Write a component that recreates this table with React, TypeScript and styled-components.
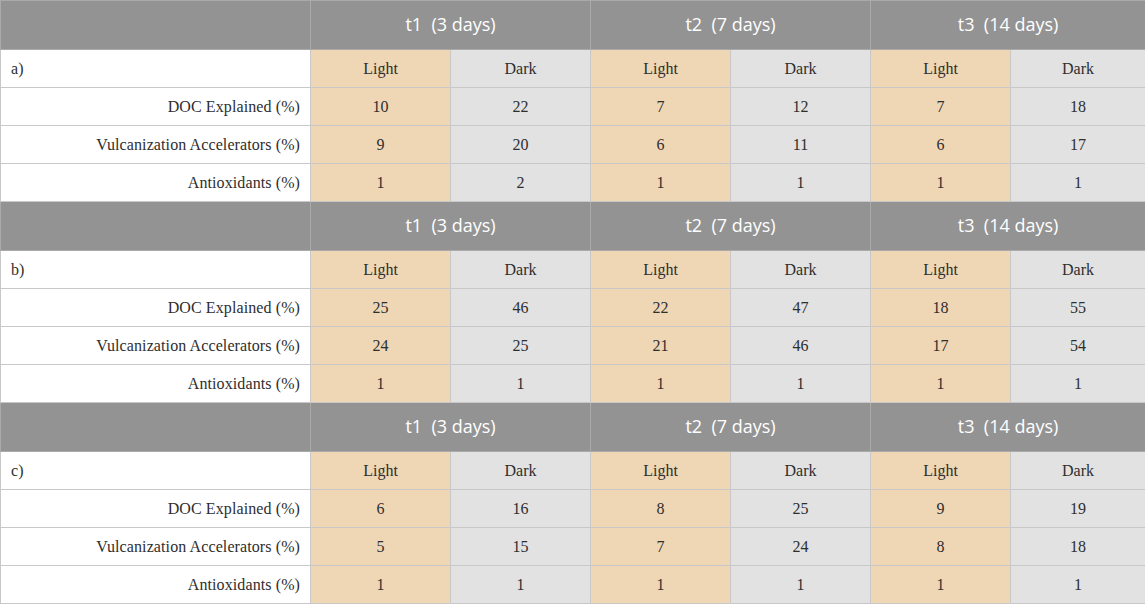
import React from "react";
import styled, { createGlobalStyle } from "styled-components";

const GlobalStyle = createGlobalStyle`
  html, body { margin: 0; padding: 0; background: #ffffff; }
  #root { width: 1145px; }
`;

const Table = styled.table`
  width: 1145px;
  border-collapse: collapse;
  table-layout: fixed;
  font-family: "Liberation Serif", "Times New Roman", serif;
`;

const Col = styled.col<{ $w: number }>`
  width: ${(p) => p.$w}px;
`;

const HeadRow = styled.tr`
  height: 49px;
`;

const HeadCell = styled.th`
  background: #939393;
  color: #ffffff;
  font-family: "Open Sans", "Noto Sans", sans-serif;
  font-weight: 400;
  font-size: 18px;
  text-align: center;
  padding: 0 0 2px 0;
  border: 1px solid #aaaaaa;
  white-space: pre;
`;

const Row = styled.tr`
  height: 38px;
`;

const LabelCell = styled.td<{ $align?: "left" | "right" }>`
  background: #ffffff;
  color: #2e2e2e;
  font-size: 16px;
  letter-spacing: 0.1px;
  text-align: ${(p) => p.$align ?? "right"};
  padding: 0 10px 0 10px;
  border: 1px solid #c8c8c8;
  white-space: nowrap;
`;

const ValueCell = styled.td<{ $tone: "light" | "dark" }>`
  background: ${(p) => (p.$tone === "light" ? "#efd7b6" : "#e2e2e2")};
  color: #2e2e2e;
  font-size: 16px;
  text-align: center;
  padding: 0;
  border: 1px solid #c8c8c8;
`;

type Block = {
  id: string;
  rows: { label: string; values: number[] }[];
};

const blocks: Block[] = [
  {
    id: "a)",
    rows: [
      { label: "DOC Explained (%)", values: [10, 22, 7, 12, 7, 18] },
      { label: "Vulcanization Accelerators (%)", values: [9, 20, 6, 11, 6, 17] },
      { label: "Antioxidants (%)", values: [1, 2, 1, 1, 1, 1] },
    ],
  },
  {
    id: "b)",
    rows: [
      { label: "DOC Explained (%)", values: [25, 46, 22, 47, 18, 55] },
      { label: "Vulcanization Accelerators (%)", values: [24, 25, 21, 46, 17, 54] },
      { label: "Antioxidants (%)", values: [1, 1, 1, 1, 1, 1] },
    ],
  },
  {
    id: "c)",
    rows: [
      { label: "DOC Explained (%)", values: [6, 16, 8, 25, 9, 19] },
      { label: "Vulcanization Accelerators (%)", values: [5, 15, 7, 24, 8, 18] },
      { label: "Antioxidants (%)", values: [1, 1, 1, 1, 1, 1] },
    ],
  },
];

const periods = ["t1  (3 days)", "t2  (7 days)", "t3  (14 days)"];
const tones: ("light" | "dark")[] = ["light", "dark", "light", "dark", "light", "dark"];
const colWidths = [310, 140, 140, 140, 140, 140, 135];

export default function App() {
  return (
    <>
      <GlobalStyle />
      <Table>
        <colgroup>
          {colWidths.map((w, i) => (
            <Col key={i} $w={w} />
          ))}
        </colgroup>
        <tbody>
          {blocks.map((b) => (
            <React.Fragment key={b.id}>
              <HeadRow>
                <HeadCell />
                {periods.map((p) => (
                  <HeadCell key={p} colSpan={2}>
                    {p}
                  </HeadCell>
                ))}
              </HeadRow>
              <Row>
                <LabelCell $align="left">{b.id}</LabelCell>
                {tones.map((t, i) => (
                  <ValueCell key={i} $tone={t}>
                    {t === "light" ? "Light" : "Dark"}
                  </ValueCell>
                ))}
              </Row>
              {b.rows.map((r) => (
                <Row key={r.label}>
                  <LabelCell>{r.label}</LabelCell>
                  {r.values.map((v, i) => (
                    <ValueCell key={i} $tone={tones[i]}>
                      {v}
                    </ValueCell>
                  ))}
                </Row>
              ))}
            </React.Fragment>
          ))}
        </tbody>
      </Table>
    </>
  );
}
